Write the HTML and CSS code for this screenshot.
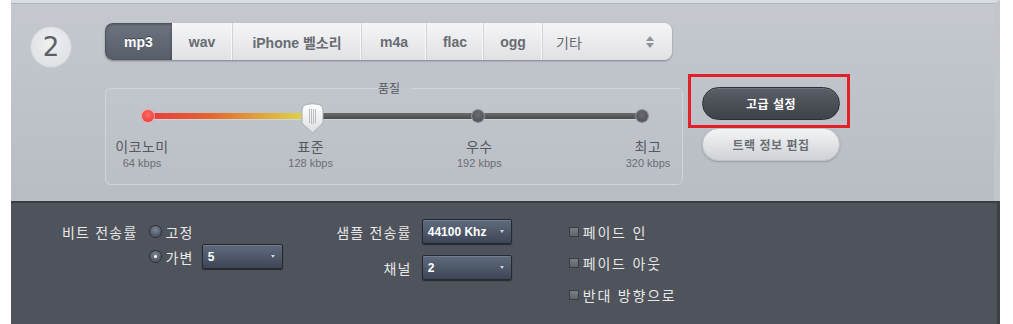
FILE: index.html
```html
<!DOCTYPE html>
<html lang="ko">
<head>
<meta charset="utf-8">
<title>변환 설정</title>
<link rel="stylesheet" href="styles.css">
</head>
<body>
<div class="app">
  <section class="top">
    <div class="step">2</div>
    <div class="main">
      <div class="tabs">
        <div class="tab active w67">mp3</div>
        <div class="tab w61">wav</div>
        <div class="tab w129">iPhone 벨소리</div>
        <div class="tab w65">m4a</div>
        <div class="tab w57">flac</div>
        <div class="tab w59">ogg</div>
        <div class="tab other w129">
          <span>기타</span>
          <svg class="updown" width="10" height="14" viewBox="0 0 10 14"><path d="M5 1 L9 6 H1Z" fill="#8e939a"/><path d="M5 13 L9 8 H1Z" fill="#8e939a"/></svg>
        </div>
      </div>
      <div class="row">
        <fieldset class="quality">
          <legend>품질</legend>
          <div class="slider">
            <span class="dot red"></span>
            <span class="seg fill"></span>
            <svg class="thumb" width="23" height="31" viewBox="0 0 23 31">
              <defs><linearGradient id="tg" x1="0" y1="0" x2="0" y2="1"><stop offset="0" stop-color="#ffffff"/><stop offset="1" stop-color="#dcdfe2"/></linearGradient></defs>
              <path d="M5 1.5 Q11.5 0 18 1.5 Q22 2.5 22 7 L22 20 L11.5 30 L1 20 L1 7 Q1 2.5 5 1.5Z" fill="url(#tg)" stroke="#a9adb2"/>
              <g stroke="#b8bcc1" stroke-width="1"><line x1="8.5" y1="6" x2="8.5" y2="20"/><line x1="10.5" y1="6" x2="10.5" y2="21"/><line x1="12.5" y1="6" x2="12.5" y2="21"/><line x1="14.5" y1="6" x2="14.5" y2="20"/></g>
            </svg>
            <span class="seg"></span>
            <span class="dot"></span>
            <span class="seg"></span>
            <span class="dot"></span>
          </div>
          <div class="labels">
            <div class="lab"><span class="name">이코노미</span><span class="rate">64 kbps</span></div>
            <div class="lab"><span class="name">표준</span><span class="rate">128 kbps</span></div>
            <div class="lab"><span class="name">우수</span><span class="rate">192 kbps</span></div>
            <div class="lab"><span class="name">최고</span><span class="rate">320 kbps</span></div>
          </div>
        </fieldset>
        <div class="actions">
          <button class="pill dark">고급 설정</button>
          <button class="pill light">트랙 정보 편집</button>
          <div class="highlight"></div>
        </div>
      </div>
    </div>
  </section>
  <section class="bottom">
    <div class="col bitrate">
      <span class="lbl">비트 전송률</span>
      <div class="opt"><span class="radio"></span><span>고정</span></div>
      <span></span>
      <div class="opt"><span class="radio on"></span><span class="vtxt">가변</span><div class="select w81"><span>5</span><i></i></div></div>
    </div>
    <div class="col sample">
      <span class="lbl">샘플 전송률</span>
      <div class="select w90"><span>44100 Khz</span><i></i></div>
      <span class="lbl">채널</span>
      <div class="select w90"><span>2</span><i></i></div>
    </div>
    <div class="col checks">
      <div class="chk"><span class="box"></span><span>페이드 인</span></div>
      <div class="chk"><span class="box"></span><span>페이드 아웃</span></div>
      <div class="chk"><span class="box"></span><span>반대 방향으로</span></div>
    </div>
  </section>
</div>
</body>
</html>
```

FILE: styles.css
```css
* { box-sizing: border-box; }
html, body { margin: 0; padding: 0; background: #ffffff; }
body { font-family: "Noto Sans CJK KR", "Liberation Sans", sans-serif; }

.app {
  margin-left: 11px;
  width: 989px;
  height: 324px;
  display: flex;
  flex-direction: column;
}

.top {
  height: 201px;
  display: flex;
  align-items: flex-start;
  padding: 20px 0 0 20px;
  background: linear-gradient(#c5c9cf, #b8bdc3);
  border-top: 3px solid #d9dce0;
  border-right: 6px solid #c2c6cb;
  box-shadow: inset 0 1px 0 #aeb3b9;
}

.step {
  width: 40px;
  height: 40px;
  margin-top: 4px;
  border-radius: 50%;
  background: radial-gradient(circle at 50% 40%, #eef0f2, #dadde1);
  box-shadow: 0 0 0 1px #c9cdd2;
  color: #5c6066;
  font-family: "DejaVu Sans", sans-serif;
  font-size: 26px;
  line-height: 40px;
  text-align: center;
}

.main { margin-left: 34px; display: flex; flex-direction: column; }

.tabs {
  display: flex;
  width: 567px;
  height: 37px;
  border-radius: 8px;
  background: linear-gradient(#f5f5f6, #e1e2e4);
  box-shadow: 0 1px 2px rgba(0,0,0,0.35);
}
.tab {
  height: 37px;
  display: flex;
  align-items: center;
  justify-content: center;
  font-family: "Liberation Sans", "Noto Sans CJK KR", sans-serif;
  font-weight: bold;
  font-size: 14px;
  color: #686c72;
  border-right: 1px solid #d2d3d6;
  box-shadow: inset -1px 0 0 #f8f8f8;
}
.tab.active {
  color: #ffffff;
  background: linear-gradient(#6d737f, #575d69);
  border-radius: 8px 0 0 8px;
  box-shadow: inset 0 1px 3px rgba(0,0,0,0.4);
  border-right: 0;
  text-shadow: 0 -1px 0 rgba(0,0,0,0.4);
}
.tab.other {
  justify-content: space-between;
  padding: 0 17px 0 13px;
  border-right: 0;
  box-shadow: none;
  font-weight: normal;
}
.updown { display: block; }
.w67 { width: 67px; }
.w61 { width: 61px; }
.w129 { width: 129px; }
.w65 { width: 65px; }
.w57 { width: 57px; }
.w59 { width: 59px; }

.row { display: flex; align-items: flex-start; margin-top: 21px; }

.quality {
  width: 578px;
  margin: 0;
  padding: 0 34px 13px 36px;
  border: 1px solid #d1d4d8;
  border-radius: 6px;
  background: rgba(255,255,255,0.04);
}
.quality legend {
  margin: 0 auto;
  padding: 0 6px;
  font-size: 12px;
  line-height: 14px;
  color: #55595f;
  position: relative;
  left: -6px;
}

.slider {
  display: flex;
  align-items: flex-start;
  height: 31px;
  margin-top: 8px;
}
.dot {
  width: 12px;
  height: 12px;
  margin-top: 7px;
  border-radius: 50%;
  background: radial-gradient(circle at 50% 40%, #6a6d72, #46494e);
  box-shadow: 0 0 0 1px #8b8f95;
  flex: none;
  position: relative;
  z-index: 1;
}
.dot.red {
  background: radial-gradient(circle at 50% 40%, #ff6b66, #e6322f);
  box-shadow: 0 0 0 1px #f2a3a0;
}
.seg {
  flex: 1;
  height: 6px;
  margin-top: 10px;
  background: linear-gradient(#6a6b6d, #4a4b4d);
  box-shadow: 0 1px 0 rgba(255,255,255,0.25);
}
.seg.fill {
  background: linear-gradient(90deg, #e8403b 0%, #e5612f 35%, #e2a33a 70%, #dcd64a 100%);
}
.thumb {
  flex: none;
  margin: 0 -5px;
  position: relative;
  z-index: 2;
  display: block;
}

.labels {
  display: flex;
  justify-content: space-between;
  margin: 3px -40px 0;
}
.lab {
  width: 80px;
  display: flex;
  flex-direction: column;
  align-items: center;
}
.lab .name { font-size: 14px; line-height: 18px; color: #55595f; letter-spacing: 0.5px; }
.lab .rate { font-size: 11px; line-height: 16px; color: #6a6e74; font-family: "Liberation Sans", sans-serif; }

.actions {
  position: relative;
  margin-left: 19px;
  padding-top: 6px;
  display: flex;
  flex-direction: column;
  gap: 8px;
}
.pill {
  width: 138px;
  height: 33px;
  border-radius: 17px;
  font-family: "Noto Sans CJK KR", sans-serif;
  font-weight: bold;
  font-size: 12px;
  letter-spacing: 0.5px;
  padding: 0;
  cursor: pointer;
}
.pill.dark {
  color: #ffffff;
  background: linear-gradient(#5a5e66, #3e4249);
  border: 1px solid #2c2f34;
  box-shadow: inset 0 1px 0 rgba(255,255,255,0.15);
}
.pill.light {
  color: #6a6e74;
  background: linear-gradient(#f3f4f5, #cfd2d6);
  border: 1px solid #c0c4c9;
  box-shadow: 0 1px 2px rgba(0,0,0,0.2);
}
.highlight {
  position: absolute;
  left: -14px;
  top: -7px;
  width: 162px;
  height: 54px;
  border: 3px solid #e0212b;
  pointer-events: none;
}

.bottom {
  flex: 1;
  display: flex;
  align-items: flex-start;
  padding: 16px 0 0 51px;
  background: #4f535b;
  border-top: 2px solid #393c42;
  border-right: 3px solid #3e4147;
  color: #e8e8e8;
  font-size: 14px;
  letter-spacing: 1.2px;
}
.col { display: grid; }
.bitrate {
  grid-template-columns: auto auto;
  column-gap: 13px;
  grid-auto-rows: 25px;
  align-items: center;
}
.sample {
  margin-left: 48px;
  grid-template-columns: 80px 90px;
  column-gap: 11px;
  row-gap: 11px;
  grid-auto-rows: 25px;
  align-items: center;
}
.lbl { text-align: right; line-height: 18px; margin-right: -1px; }
.opt { display: flex; align-items: center; gap: 5px; line-height: 18px; }
.vtxt { margin-right: 3px; }
.radio {
  width: 11px;
  height: 11px;
  border-radius: 50%;
  background: radial-gradient(circle at 50% 35%, #7d8896, #3a414c);
  box-shadow: 0 0 0 1px #2b2f35;
  flex: none;
  display: flex;
  align-items: center;
  justify-content: center;
}
.radio.on::after {
  content: "";
  width: 3px;
  height: 3px;
  border-radius: 50%;
  background: #ffffff;
}
.select {
  height: 25px;
  display: flex;
  align-items: center;
  justify-content: space-between;
  padding: 0 7px 0 5px;
  background: linear-gradient(#5f6b7d, #3d4656);
  border: 1px solid #262a30;
  border-radius: 2px;
  box-shadow: 0 1px 1px rgba(0,0,0,0.5), inset 0 1px 0 rgba(255,255,255,0.12);
  font-family: "Liberation Sans", sans-serif;
  font-weight: bold;
  font-size: 12px;
  letter-spacing: 0;
  color: #ffffff;
}
.select i {
  width: 0;
  height: 0;
  border-left: 2.5px solid transparent;
  border-right: 2.5px solid transparent;
  border-top: 3px solid #d0d4da;
}
.w81 { width: 81px; }
.w90 { width: 90px; }

.checks {
  margin-left: 57px;
  grid-auto-rows: 25px;
  row-gap: 6.5px;
  letter-spacing: 1.8px;
}
.chk { display: flex; align-items: center; gap: 4px; line-height: 18px; }
.box {
  width: 10px;
  height: 10px;
  background: linear-gradient(#7a7e85, #5e6269);
  border: 1px solid #3a3d42;
  flex: none;
}
```
